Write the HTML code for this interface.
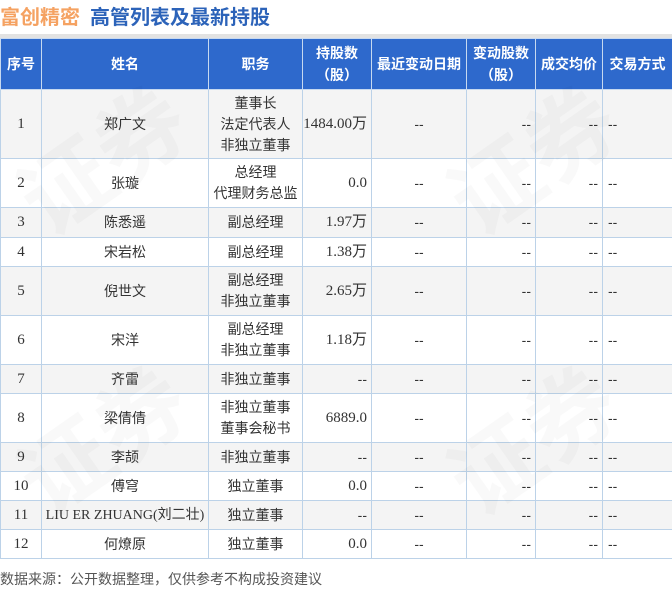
<!DOCTYPE html>
<html><head><meta charset="utf-8"><style>
body{margin:0;width:672px;height:588px;background:#fff;position:relative;overflow:hidden;font-family:"Liberation Sans","Noto Sans CJK SC",sans-serif;}
.t1{position:absolute;left:0;top:1px;font-size:20px;font-weight:bold;color:#f5a262}
.t2{position:absolute;left:90px;top:1px;font-size:20px;font-weight:bold;color:#2c63b9}
.bar{position:absolute;left:0;top:34px;width:672px;height:4px;background:#e2e2e2}
table{position:absolute;left:0;top:38px;border-collapse:collapse;table-layout:fixed;width:672px}
td,th{border:1px solid #bcd2e8;padding:0;text-align:center;font-size:14px;color:#333;line-height:21px}
th{background:#2e69cc;color:#fff;font-weight:bold;border-color:#c7d9f0;height:50px;font-size:14px;line-height:22px}
tr:nth-child(even) td{background:#f4f4f4}
.n{font-family:"Liberation Serif","Noto Sans CJK SC",serif;font-size:15px}
.r{text-align:right;padding-right:4px}
.l{text-align:left;padding-left:5px}
.foot{position:absolute;left:0;top:569px;font-size:14px;color:#555}
.wm{position:absolute;font-size:90px;color:rgba(0,0,0,0.025);transform:rotate(-35deg);font-weight:bold}
</style></head><body>
<div class="t1">富创精密</div><div class="t2">高管列表及最新持股</div>
<div class="bar"></div>
<table>
<colgroup><col style="width:41px"><col style="width:167px"><col style="width:94px"><col style="width:69px"><col style="width:95px"><col style="width:69px"><col style="width:67px"><col style="width:70px"></colgroup>
<tr><th>序号</th><th>姓名</th><th>职务</th><th>持股数<br>（股）</th><th>最近变动日期</th><th>变动股数<br>（股）</th><th>成交均价</th><th>交易方式</th></tr>
<tr style="height:69px"><td class="n">1</td><td>郑广文</td><td>董事长<br>法定代表人<br>非独立董事</td><td class="n r">1484.00万</td><td>--</td><td class="r">--</td><td class="r">--</td><td class="l">--</td></tr>
<tr style="height:49px"><td class="n">2</td><td>张璇</td><td>总经理<br>代理财务总监</td><td class="n r">0.0</td><td>--</td><td class="r">--</td><td class="r">--</td><td class="l">--</td></tr>
<tr style="height:30px"><td class="n">3</td><td>陈悉遥</td><td>副总经理</td><td class="n r">1.97万</td><td>--</td><td class="r">--</td><td class="r">--</td><td class="l">--</td></tr>
<tr style="height:29px"><td class="n">4</td><td>宋岩松</td><td>副总经理</td><td class="n r">1.38万</td><td>--</td><td class="r">--</td><td class="r">--</td><td class="l">--</td></tr>
<tr style="height:49px"><td class="n">5</td><td>倪世文</td><td>副总经理<br>非独立董事</td><td class="n r">2.65万</td><td>--</td><td class="r">--</td><td class="r">--</td><td class="l">--</td></tr>
<tr style="height:49px"><td class="n">6</td><td>宋洋</td><td>副总经理<br>非独立董事</td><td class="n r">1.18万</td><td>--</td><td class="r">--</td><td class="r">--</td><td class="l">--</td></tr>
<tr style="height:29px"><td class="n">7</td><td>齐雷</td><td>非独立董事</td><td class="r">--</td><td>--</td><td class="r">--</td><td class="r">--</td><td class="l">--</td></tr>
<tr style="height:49px"><td class="n">8</td><td>梁倩倩</td><td>非独立董事<br>董事会秘书</td><td class="n r">6889.0</td><td>--</td><td class="r">--</td><td class="r">--</td><td class="l">--</td></tr>
<tr style="height:29px"><td class="n">9</td><td>李颉</td><td>非独立董事</td><td class="r">--</td><td>--</td><td class="r">--</td><td class="r">--</td><td class="l">--</td></tr>
<tr style="height:29px"><td class="n">10</td><td>傅穹</td><td>独立董事</td><td class="n r">0.0</td><td>--</td><td class="r">--</td><td class="r">--</td><td class="l">--</td></tr>
<tr style="height:29px"><td class="n">11</td><td class="n" style="font-size:14px">LIU ER ZHUANG(刘二壮)</td><td>独立董事</td><td class="r">--</td><td>--</td><td class="r">--</td><td class="r">--</td><td class="l">--</td></tr>
<tr style="height:29px"><td class="n">12</td><td>何燎原</td><td>独立董事</td><td class="n r">0.0</td><td>--</td><td class="r">--</td><td class="r">--</td><td class="l">--</td></tr>
</table>
<div class="wm" style="left:10px;top:90px">证券</div>
<div class="wm" style="left:440px;top:90px">证券</div>
<div class="wm" style="left:10px;top:370px">证券</div>
<div class="wm" style="left:440px;top:370px">证券</div>
<div class="foot">数据来源：公开数据整理，仅供参考不构成投资建议</div>
</body></html>
